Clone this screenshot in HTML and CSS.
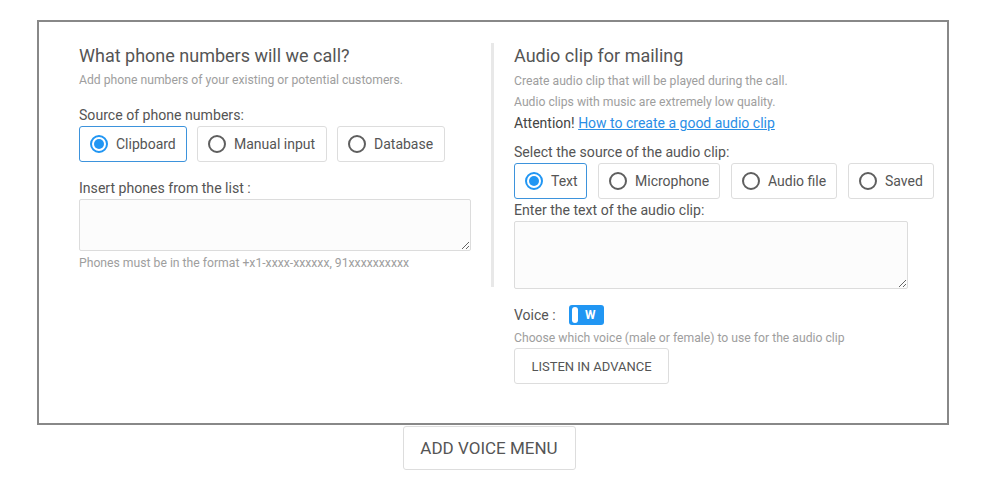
FILE: index.html
```html
<!DOCTYPE html>
<html>
<head>
<meta charset="utf-8">
<link rel="stylesheet" href="styles.css">
</head>
<body>
<div class="card">
  <div class="col col-left">
    <div class="title">What phone numbers will we call?</div>
    <div class="sub">Add phone numbers of your existing or potential customers.</div>
    <div class="label label-source">Source of phone numbers:</div>
    <div class="radios">
      <div class="radio selected w-clip"><span class="dot"></span>Clipboard</div>
      <div class="radio w-manual"><span class="dot"></span>Manual input</div>
      <div class="radio w-db"><span class="dot"></span>Database</div>
    </div>
    <div class="label label-insert">Insert phones from the list :</div>
    <textarea class="ta ta-left"></textarea>
    <div class="hint">Phones must be in the format +x1-xxxx-xxxxxx, 91xxxxxxxxxx</div>
  </div>
  <div class="col col-right">
    <div class="title">Audio clip for mailing</div>
    <div class="sub sub-r sub-first">Create audio clip that will be played during the call.</div>
    <div class="sub sub-r">Audio clips with music are extremely low quality.</div>
    <div class="attention">Attention! <a href="#">How to create a good audio clip</a></div>
    <div class="label label-select">Select the source of the audio clip:</div>
    <div class="radios">
      <div class="radio selected w-text"><span class="dot"></span>Text</div>
      <div class="radio w-mic"><span class="dot"></span>Microphone</div>
      <div class="radio w-file"><span class="dot"></span>Audio file</div>
      <div class="radio w-saved"><span class="dot"></span>Saved</div>
    </div>
    <div class="label label-enter">Enter the text of the audio clip:</div>
    <textarea class="ta ta-right"></textarea>
    <div class="voice-row">
      <span class="voice-label">Voice :</span>
      <span class="toggle"><span class="knob"></span><span class="tw">W</span></span>
    </div>
    <div class="hint hint-voice">Choose which voice (male or female) to use for the audio clip</div>
    <button class="btn btn-listen">LISTEN IN ADVANCE</button>
  </div>
</div>
<div class="bottom">
  <button class="btn btn-add">ADD VOICE MENU</button>
</div>
</body>
</html>
```

FILE: styles.css
```css
* { box-sizing: border-box; }
body {
  margin: 0;
  padding: 20px 0 0 37px;
  font-family: Roboto, "Liberation Sans", Arial, sans-serif;
  color: #555;
  background: #fff;
}
.card {
  width: 912px;
  height: 405px;
  border: 2px solid #888;
  padding: 21px 0 0 0;
  display: flex;
  align-items: flex-start;
}
.col-left {
  width: 455px;
  padding: 0 20px 16px 40px;
  border-right: 3px solid #e8e8e8;
}
.col-right {
  padding: 0 0 0 20px;
  flex: 1;
}
.title {
  font-size: 18px;
  line-height: 26px;
  color: #555;
}
.sub {
  font-size: 12.2px;
  line-height: 16px;
  color: #9e9e9e;
  margin-top: 3px;
}
.sub-r {
  line-height: 21px;
  margin-top: 0;
}
.sub-first { margin-top: 2px; }
.attention {
  font-size: 14px;
  line-height: 21px;
  color: #444;
}
.attention a { color: #2a8ee6; text-decoration: underline; }
.label {
  font-size: 14.1px;
  line-height: 20px;
  color: #555;
}
.label-source { margin-top: 17px; }
.label-insert { margin-top: 16px; }
.label-select { margin-top: 8px; }
.label-enter { margin-top: 1px; }
.radios {
  display: flex;
  gap: 11px;
  margin-top: 1px;
}
.col-left .radios { gap: 10px; }
.radio {
  height: 36px;
  border: 1px solid #ddd;
  border-radius: 3px;
  display: flex;
  align-items: center;
  padding-left: 10px;
  font-size: 14px;
  color: #555;
  gap: 8px;
  background: #fff;
}
.radio.selected { border-color: #3d93dc; }
.dot {
  width: 18px;
  height: 18px;
  border: 2px solid #5f5f5f;
  border-radius: 50%;
  flex: none;
  position: relative;
}
.radio.selected .dot { border-color: #2196f3; }
.radio.selected .dot::after {
  content: "";
  position: absolute;
  left: 2px; top: 2px;
  width: 10px; height: 10px;
  border-radius: 50%;
  background: #2196f3;
}
.w-clip { width: 108px; }
.w-manual { width: 130px; }
.w-db { width: 108px; }
.w-text { width: 73px; }
.w-mic { width: 122px; }
.w-file { width: 106px; }
.w-saved { width: 86px; }
.ta {
  display: block;
  margin-top: 1px;
  border: 1px solid #dcdcdc;
  border-radius: 2px;
  background: #fcfcfc;
  resize: vertical;
  font-family: inherit;
}
.ta-left { width: 392px; height: 52px; }
.ta-right { width: 394px; height: 68px; }
.hint {
  font-size: 12.2px;
  line-height: 16px;
  color: #9e9e9e;
  margin-top: 4px;
}
.voice-row {
  margin-top: 16px;
  height: 20px;
  display: flex;
  align-items: center;
}
.voice-label {
  font-size: 14px;
  line-height: 20px;
  width: 55px;
}
.toggle {
  width: 35px;
  height: 20px;
  background: #2196f3;
  border-radius: 3px;
  position: relative;
  display: inline-flex;
  align-items: center;
}
.knob {
  position: absolute;
  left: 3px; top: 2px;
  width: 6px; height: 16px;
  background: #fff;
  border-radius: 3px;
}
.tw {
  color: #fff;
  font-size: 12px;
  font-weight: bold;
  margin-left: 16px;
}
.hint-voice { margin-top: 5px; }
.btn {
  display: block;
  background: #fff;
  border: 1px solid #ddd;
  border-radius: 3px;
  color: #555;
  font-family: inherit;
  cursor: pointer;
}
.btn-listen {
  margin-top: 2px;
  width: 155px;
  height: 36px;
  font-size: 13px;
  padding: 0;
}
.bottom {
  width: 912px;
  padding-right: 8px;
  display: flex;
  justify-content: center;
  margin-top: 1px;
}
.btn-add {
  width: 173px;
  height: 44px;
  font-size: 17px;
  padding: 0;
}
```
